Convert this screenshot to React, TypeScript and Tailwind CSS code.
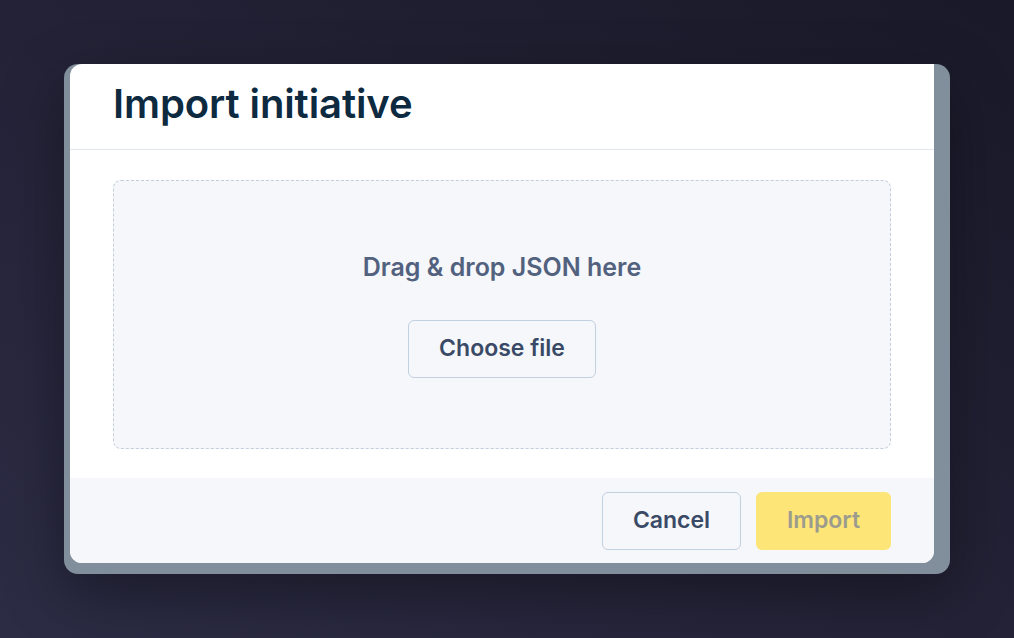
export default function App() {
  return (
    <div
      className="flex h-screen w-full items-center justify-center bg-gradient-to-tr from-[#2c2c45] to-[#1a1929]"
      style={{ fontFamily: "Inter, 'Noto Sans', sans-serif" }}
    >
      <div className="w-[886px] rounded-[14px] bg-[#808f9b] pb-[11px] pl-[6px] pr-[16px] shadow-[0_20px_60px_rgba(0,0,0,0.35)]">
        <div className="overflow-hidden rounded-[12px] rounded-tr-none bg-white">
          <div className="flex h-[86px] items-center border-b border-[#e3e8f0] pb-[6px] pl-[43px]">
            <h1 className="text-[40px] font-semibold tracking-[-0.1px] text-[#0d2a40]">
              Import initiative
            </h1>
          </div>
          <div className="px-[43px] pb-[29px] pt-[30px]">
            <div className="flex h-[269px] flex-col items-center justify-center gap-[38px] rounded-[8px] border border-dashed border-[#c3cedd] bg-[#f5f7fb]">
              <p className="text-[25px] font-semibold leading-[30px] text-[#52617e]">
                Drag &amp; drop JSON here
              </p>
              <button className="h-[58px] w-[188px] rounded-[6px] border border-[#c3d0e0] bg-[#f5f7fb] text-[23px] font-semibold text-[#3a4a66]">
                Choose file
              </button>
            </div>
          </div>
          <div className="flex h-[85px] items-center justify-end gap-[15px] bg-[#f5f7fb] pr-[43px]">
            <button className="h-[58px] w-[139px] rounded-[6px] border border-[#c3d0e0] bg-[#f5f7fb] text-[23px] font-semibold text-[#3a4a66]">
              Cancel
            </button>
            <button className="h-[58px] w-[135px] rounded-[6px] bg-[#fde578] text-[23px] font-semibold text-[#9c9c8e]">
              Import
            </button>
          </div>
        </div>
      </div>
    </div>
  );
}
